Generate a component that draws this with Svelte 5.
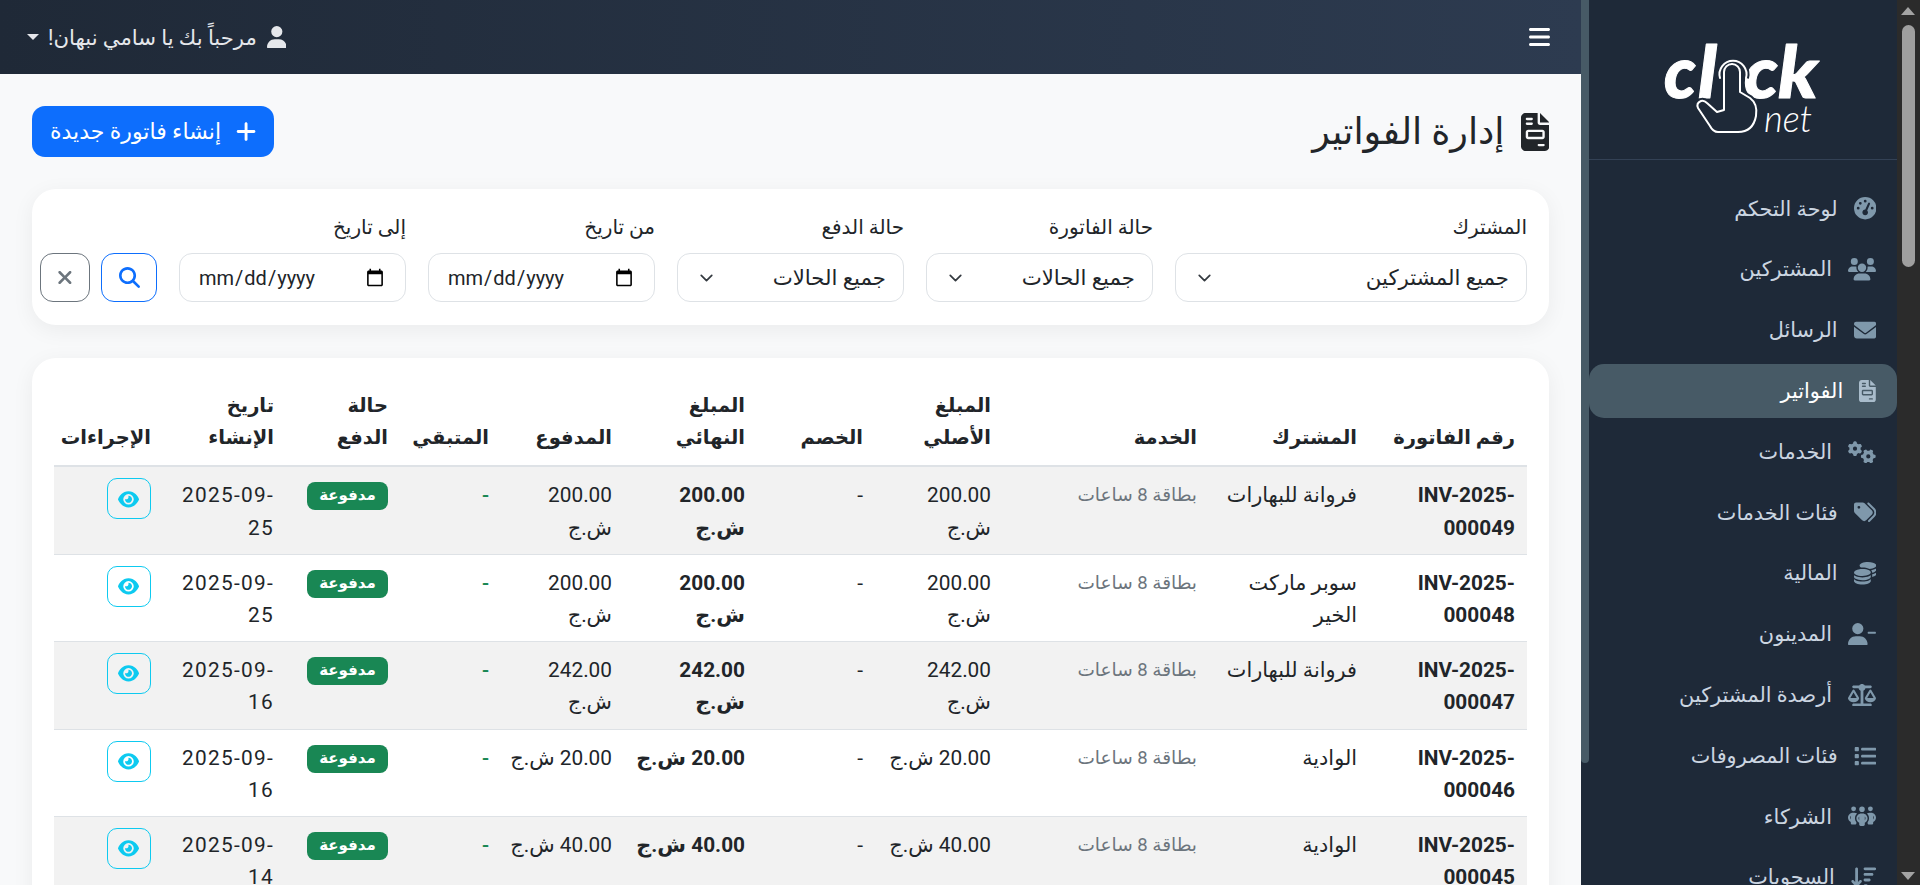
<script>
  const icons = {
    gauge: [512, 'M0 256a256 256 0 1 1 512 0A256 256 0 1 1 0 256zM288 96a32 32 0 1 0 -64 0 32 32 0 1 0 64 0zM256 416c35.3 0 64-28.7 64-64c0-17.4-6.9-33.1-18.1-44.6L366 161.7c5.3-12.1-.2-26.3-12.3-31.6s-26.3 .2-31.6 12.3L257.9 288c-.6 0-1.3 0-1.9 0c-35.3 0-64 28.7-64 64s28.7 64 64 64zM176 144a32 32 0 1 0 -64 0 32 32 0 1 0 64 0zM96 288a32 32 0 1 0 0-64 32 32 0 1 0 0 64zm352-32a32 32 0 1 0 -64 0 32 32 0 1 0 64 0z'],
    users: [640, 'M144 0a80 80 0 1 1 0 160A80 80 0 1 1 144 0zM512 0a80 80 0 1 1 0 160A80 80 0 1 1 512 0zM0 298.7C0 239.8 47.8 192 106.7 192h42.7c15.9 0 31 3.5 44.6 9.7c-1.3 7.2-1.9 14.7-1.9 22.3c0 38.2 16.8 72.5 43.3 96c-.2 0-.4 0-.7 0H21.3C9.6 320 0 310.4 0 298.7zM405.3 320c-.2 0-.4 0-.7 0c26.6-23.5 43.3-57.8 43.3-96c0-7.6-.7-15-1.9-22.3c13.6-6.3 28.7-9.7 44.6-9.7h42.7C592.2 192 640 239.8 640 298.7c0 11.8-9.6 21.3-21.3 21.3H405.3zM224 224a96 96 0 1 1 192 0 96 96 0 1 1 -192 0zM128 485.3C128 411.7 187.7 352 261.3 352H378.7C452.3 352 512 411.7 512 485.3c0 14.7-11.9 26.7-26.7 26.7H154.7c-14.7 0-26.7-11.9-26.7-26.7z'],
    envelope: [512, 'M48 64C21.5 64 0 85.5 0 112c0 15.1 7.1 29.3 19.2 38.4L236.8 313.6c11.4 8.5 27 8.5 38.4 0L492.8 150.4c12.1-9.1 19.2-23.3 19.2-38.4c0-26.5-21.5-48-48-48H48zM0 176V384c0 35.3 28.7 64 64 64H448c35.3 0 64-28.7 64-64V176L294.4 339.2c-22.8 17.1-54 17.1-76.8 0L0 176z'],
    invoice: [384, 'M64 0C28.7 0 0 28.7 0 64V448c0 35.3 28.7 64 64 64H320c35.3 0 64-28.7 64-64V160H256c-17.7 0-32-14.3-32-32V0H64zM256 0V128H384L256 0zM80 64h64c8.8 0 16 7.2 16 16s-7.2 16-16 16H80c-8.8 0-16-7.2-16-16s7.2-16 16-16zm0 64h64c8.8 0 16 7.2 16 16s-7.2 16-16 16H80c-8.8 0-16-7.2-16-16s7.2-16 16-16zm16 96H288c17.7 0 32 14.3 32 32v64c0 17.7-14.3 32-32 32H96c-17.7 0-32-14.3-32-32V256c0-17.7 14.3-32 32-32zm0 32v64H288V256H96zM240 416h64c8.8 0 16 7.2 16 16s-7.2 16-16 16H240c-8.8 0-16-7.2-16-16s7.2-16 16-16z'],
    gears: [640, 'M308.5 135.3c7.1-6.3 9.9-16.2 6.2-25c-2.3-5.3-4.8-10.5-7.6-15.5L304 89.4c-3-5-6.3-9.9-9.8-14.6c-5.7-7.6-15.7-10.1-24.7-7.1l-28.2 9.3c-10.7-8.8-23-16-36.2-20.9L199 27.1c-1.9-9.3-9.1-16.7-18.5-17.8C173.9 8.4 167.2 8 160.4 8h-.7c-6.8 0-13.5 .4-20.1 1.2c-9.4 1.1-16.6 8.6-18.5 17.8L115 56.1c-13.3 5-25.5 12.1-36.2 20.9L50.5 67.8c-9-3-19-.5-24.7 7.1c-3.5 4.7-6.8 9.6-9.9 14.6l-3 5.3c-2.8 5-5.3 10.2-7.6 15.6c-3.7 8.7-.9 18.6 6.2 25l22.2 19.8C32.6 161.9 32 168.9 32 176s.6 14.1 1.7 20.9L11.5 216.7c-7.1 6.3-9.9 16.2-6.2 25c2.3 5.3 4.8 10.5 7.6 15.6l3 5.2c3 5.1 6.3 9.9 9.9 14.6c5.7 7.6 15.7 10.1 24.7 7.1l28.2-9.3c10.7 8.8 23 16 36.2 20.8l6.1 29.1c1.9 9.3 9.1 16.7 18.5 17.8c6.7 .8 13.5 1.2 20.4 1.2s13.7-.4 20.4-1.2c9.4-1.1 16.6-8.6 18.5-17.8l6.1-29.1c13.3-5 25.5-12.1 36.2-20.8l28.2 9.3c9 3 19 .5 24.7-7.1c3.5-4.7 6.8-9.5 9.8-14.6l3.1-5.4c2.8-5 5.3-10.2 7.6-15.5c3.7-8.7 .9-18.6-6.2-25l-22.2-19.8c1.1-6.8 1.7-13.8 1.7-20.9s-.6-14.1-1.7-20.9l22.2-19.8zM208 176a48 48 0 1 1 -96 0 48 48 0 1 1 96 0zM504.7 500.5c6.3 7.1 16.2 9.9 25 6.2c5.3-2.3 10.5-4.8 15.5-7.6l5.4-3.1c5-3 9.9-6.3 14.6-9.8c7.6-5.7 10.1-15.7 7.1-24.7l-9.3-28.2c8.8-10.7 16-23 20.9-36.2l29.1-6.1c9.3-1.9 16.7-9.1 17.8-18.5c.8-6.7 1.2-13.5 1.2-20.4s-.4-13.7-1.2-20.4c-1.1-9.4-8.6-16.6-17.8-18.5L583.9 307c-5-13.3-12.1-25.5-20.9-36.2l9.3-28.2c3-9 .5-19-7.1-24.7c-4.7-3.5-9.6-6.8-14.6-9.9l-5.3-3c-5-2.8-10.2-5.3-15.6-7.6c-8.7-3.7-18.6-.9-25 6.2l-19.8 22.2c-6.8-1.1-13.8-1.7-20.9-1.7s-14.1 .6-20.9 1.7l-19.8-22.2c-6.3-7.1-16.2-9.9-25-6.2c-5.3 2.3-10.5 4.8-15.6 7.6l-5.2 3c-5.1 3-9.9 6.3-14.6 9.9c-7.6 5.7-10.1 15.7-7.1 24.7l9.3 28.2c-8.8 10.7-16 23-20.8 36.2L315.1 313c-9.3 1.9-16.7 9.1-17.8 18.5c-.8 6.7-1.2 13.5-1.2 20.4s.4 13.7 1.2 20.4c1.1 9.4 8.6 16.6 17.8 18.5l29.1 6.1c5 13.3 12.1 25.5 20.8 36.2l-9.3 28.2c-3 9-.5 19 7.1 24.7c4.7 3.5 9.5 6.8 14.6 9.8l5.4 3.1c5 2.8 10.2 5.3 15.5 7.6c8.7 3.7 18.6 .9 25-6.2l19.8-22.2c6.8 1.1 13.8 1.7 20.9 1.7s14.1-.6 20.9-1.7l19.8 22.2zM464 304a48 48 0 1 1 0 96 48 48 0 1 1 0-96z'],
    tags: [512, 'M345 39.1L472.8 168.4c52.4 53 52.4 138.2 0 191.2L360.8 472.9c-9.3 9.4-24.5 9.5-33.9 .2s-9.5-24.5-.2-33.9L438.6 325.9c33.9-34.3 33.9-89.4 0-123.7L310.9 72.9c-9.3-9.4-9.2-24.6 .2-33.9s24.6-9.2 33.9 .2zM0 229.5V80C0 53.5 21.5 32 48 32H197.5c17 0 33.3 6.7 45.3 18.7l168 168c25 25 25 65.5 0 90.5L277.3 442.7c-25 25-65.5 25-90.5 0l-168-168C6.7 262.7 0 246.5 0 229.5zM144 144a32 32 0 1 0 -64 0 32 32 0 1 0 64 0z'],
    coins: [512, 'M512 80c0 18-14.3 34.6-38.4 48c-29.1 16.1-72.5 27.5-122.3 30.9c-3.7-1.8-7.4-3.5-11.3-5C300.6 137.4 248.2 128 192 128c-8.3 0-16.4 .2-24.5 .6l-1.1-.6C142.3 114.6 128 98 128 80c0-44.2 86-80 192-80S512 35.8 512 80zM160.7 161.1c10.2-.7 20.7-1.1 31.3-1.1c62.2 0 117.4 12.3 152.5 31.4C369.3 204.9 384 221.7 384 240c0 4-.7 7.9-2.1 11.7c-4.6 13.2-17 25.3-35 35.5c0 0 0 0 0 0c-.1 .1-.3 .1-.4 .2l0 0 0 0c-.3 .2-.6 .3-.9 .5c-35 19.4-90.8 32-153.6 32c-59.6 0-112.9-11.3-148.2-29.1c-1.9-.9-3.7-1.9-5.5-2.9C14.3 274.6 0 258 0 240c0-34.8 53.4-64.5 128-75.4c10.5-1.5 21.4-2.7 32.7-3.5zM416 240c0-21.9-10.6-39.9-24.1-53.4c28.3-4.4 54.2-11.4 76.2-20.5c16.3-6.8 31.5-15.2 43.9-25.5V176c0 19.3-16.5 37.1-43.8 50.9c-14.6 7.4-32.4 13.7-52.4 18.5c.1-1.8 .2-3.5 .2-5.3zm-32 96c0 18-14.3 34.6-38.4 48c-1.8 1-3.6 1.9-5.5 2.9C304.9 404.7 251.6 416 192 416c-62.8 0-118.6-12.6-153.6-32C14.3 370.6 0 354 0 336V300.6c12.5 10.3 27.6 18.7 43.9 25.5C83.4 342.6 135.8 352 192 352s108.6-9.4 148.1-25.9c7.8-3.2 15.3-6.9 22.4-10.9c6.1-3.4 11.8-7.2 17.2-11.2c1.5-1.1 2.9-2.3 4.3-3.4V304v5.7V336zm32 0V304 278.1c19-4.2 36.5-9.5 52.1-16c16.3-6.8 31.5-15.2 43.9-25.5V272c0 10.5-5 21-14.9 30.9c-16.3 16.3-45 29.7-81.3 38.4c.1-1.7 .2-3.5 .2-5.3zM192 448c56.2 0 108.6-9.4 148.1-25.9c16.3-6.8 31.5-15.2 43.9-25.5V432c0 44.2-86 80-192 80S0 476.2 0 432V396.6c12.5 10.3 27.6 18.7 43.9 25.5C83.4 438.6 135.8 448 192 448z'],
    userMinus: [640, 'M96 128a128 128 0 1 1 256 0A128 128 0 1 1 96 128zM0 482.3C0 383.8 79.8 304 178.3 304h91.4C368.2 304 448 383.8 448 482.3c0 16.4-13.3 29.7-29.7 29.7H29.7C13.3 512 0 498.7 0 482.3zM472 200H616c13.3 0 24 10.7 24 24s-10.7 24-24 24H472c-13.3 0-24-10.7-24-24s10.7-24 24-24z'],
    scale: [640, 'M384 32H512c17.7 0 32 14.3 32 32s-14.3 32-32 32H398.4c-5.2 25.8-22.9 47.1-46.4 57.3V448H512c17.7 0 32 14.3 32 32s-14.3 32-32 32H320 128c-17.7 0-32-14.3-32-32s14.3-32 32-32H288V153.3c-23.5-10.3-41.2-31.6-46.4-57.3H128c-17.7 0-32-14.3-32-32s14.3-32 32-32H256c14.6-19.4 37.8-32 64-32s49.4 12.6 64 32zm55.6 288H584.4L512 195.8 439.6 320zM512 416c-62.9 0-115.2-34-126-78.9c-2.6-11 1-22.3 6.7-32.1l95.2-163.2c5-8.6 14.2-13.8 24.1-13.8s19.1 5.3 24.1 13.8l95.2 163.2c5.7 9.8 9.3 21.1 6.7 32.1C627.2 382 574.9 416 512 416zM126.8 195.8L54.4 320H199.3L126.8 195.8zM.9 337.1c-2.6-11 1-22.3 6.7-32.1l95.2-163.2c5-8.6 14.2-13.8 24.1-13.8s19.1 5.3 24.1 13.8l95.2 163.2c5.7 9.8 9.3 21.1 6.7 32.1C242 382 189.7 416 126.8 416S11.7 382 .9 337.1z'],
    list: [512, 'M40 48C26.7 48 16 58.7 16 72v48c0 13.3 10.7 24 24 24H88c13.3 0 24-10.7 24-24V72c0-13.3-10.7-24-24-24H40zM192 64c-17.7 0-32 14.3-32 32s14.3 32 32 32H480c17.7 0 32-14.3 32-32s-14.3-32-32-32H192zm0 160c-17.7 0-32 14.3-32 32s14.3 32 32 32H480c17.7 0 32-14.3 32-32s-14.3-32-32-32H192zm0 160c-17.7 0-32 14.3-32 32s14.3 32 32 32H480c17.7 0 32-14.3 32-32s-14.3-32-32-32H192zM16 232v48c0 13.3 10.7 24 24 24H88c13.3 0 24-10.7 24-24V232c0-13.3-10.7-24-24-24H40c-13.3 0-24 10.7-24 24zM40 368c-13.3 0-24 10.7-24 24v48c0 13.3 10.7 24 24 24H88c13.3 0 24-10.7 24-24V392c0-13.3-10.7-24-24-24H40z'],
    group: [640, 'M72 88a56 56 0 1 1 112 0A56 56 0 1 1 72 88zM64 245.7C54 256.9 48 271.8 48 288s6 31.1 16 42.3V245.7zm144.4-49.3C178.7 222.7 160 261.2 160 304c0 34.3 12 65.8 32 90.5V416c0 17.7-14.3 32-32 32H96c-17.7 0-32-14.3-32-32V389.2C26.2 371.2 0 332.7 0 288c0-61.9 50.1-112 112-112h32c24 0 46.2 7.5 64.4 20.3zM448 416V394.5c20-24.7 32-56.2 32-90.5c0-42.8-18.7-81.3-48.4-107.7C449.8 183.5 472 176 496 176h32c61.9 0 112 50.1 112 112c0 44.7-26.2 83.2-64 101.2V416c0 17.7-14.3 32-32 32H480c-17.7 0-32-14.3-32-32zm8-328a56 56 0 1 1 112 0A56 56 0 1 1 456 88zM576 245.7v84.7c10-11.3 16-26.1 16-42.3s-6-31.1-16-42.3zM320 32a64 64 0 1 1 0 128 64 64 0 1 1 0-128zM240 304c0 16.2 6 31 16 42.3V261.7c-10 11.3-16 26.1-16 42.3zm144-42.3v84.7c10-11.3 16-26.1 16-42.3s-6-31.1-16-42.3zM448 304c0 44.7-26.2 83.2-64 101.2V448c0 17.7-14.3 32-32 32H288c-17.7 0-32-14.3-32-32V405.2c-37.8-18-64-56.5-64-101.2c0-61.9 50.1-112 112-112h32c61.9 0 112 50.1 112 112z'],
    sortDown: [576, 'M151.6 469.6C145.5 476.2 137 480 128 480s-17.5-3.8-23.6-10.4l-88-96c-11.9-13-11.1-33.3 2-45.2s33.3-11.1 45.2 2L96 365.7V64c0-17.7 14.3-32 32-32s32 14.3 32 32V365.7l32.4-35.4c11.9-13 32.2-13.9 45.2-2s13.9 32.2 2 45.2l-88 96zM320 480c-17.7 0-32-14.3-32-32s14.3-32 32-32h32c17.7 0 32 14.3 32 32s-14.3 32-32 32H320zm0-128c-17.7 0-32-14.3-32-32s14.3-32 32-32h96c17.7 0 32 14.3 32 32s-14.3 32-32 32H320zm0-128c-17.7 0-32-14.3-32-32s14.3-32 32-32H480c17.7 0 32 14.3 32 32s-14.3 32-32 32H320zm0-128c-17.7 0-32-14.3-32-32s14.3-32 32-32H544c17.7 0 32 14.3 32 32s-14.3 32-32 32H320z'],
    user: [448, 'M224 256A128 128 0 1 0 224 0a128 128 0 1 0 0 256zm-45.7 48C79.8 304 0 383.8 0 482.3C0 498.7 13.3 512 29.7 512H418.3c16.4 0 29.7-13.3 29.7-29.7C448 383.8 368.2 304 269.7 304H178.3z'],
    bars: [448, 'M0 96C0 78.3 14.3 64 32 64H416c17.7 0 32 14.3 32 32s-14.3 32-32 32H32C14.3 128 0 113.7 0 96zM0 256c0-17.7 14.3-32 32-32H416c17.7 0 32 14.3 32 32s-14.3 32-32 32H32c-17.7 0-32-14.3-32-32zM448 416c0 17.7-14.3 32-32 32H32c-17.7 0-32-14.3-32-32s14.3-32 32-32H416c17.7 0 32 14.3 32 32z'],
    plus: [448, 'M256 80c0-17.7-14.3-32-32-32s-32 14.3-32 32V224H48c-17.7 0-32 14.3-32 32s14.3 32 32 32H192V432c0 17.7 14.3 32 32 32s32-14.3 32-32V288H400c17.7 0 32-14.3 32-32s-14.3-32-32-32H256V80z'],
    search: [512, 'M416 208c0 45.9-14.9 88.3-40.8 122.7L502.6 457.4c12.5 12.5 12.5 32.8 0 45.3s-32.8 12.5-45.3 0L330.7 376c-34.4 25.9-76.8 40.8-122.7 40.8C93.1 416 0 322.9 0 208S93.1 0 208 0S416 93.1 416 208zM208 352a144 144 0 1 0 0-288 144 144 0 1 0 0 288z'],
    xmark: [384, 'M342.6 150.6c12.5-12.5 12.5-32.8 0-45.3s-32.8-12.5-45.3 0L192 210.7 86.6 105.4c-12.5-12.5-32.8-12.5-45.3 0s-12.5 32.8 0 45.3L146.7 256 41.4 361.4c-12.5 12.5-12.5 32.8 0 45.3s32.8 12.5 45.3 0L192 301.3 297.4 406.6c12.5 12.5 32.8 12.5 45.3 0s12.5-32.8 0-45.3L237.3 256 342.6 150.6z'],
    eye: [576, 'M288 32c-80.8 0-145.5 36.8-192.6 80.6C48.6 156 17.3 208 2.5 243.7c-3.3 7.9-3.3 16.7 0 24.6C17.3 304 48.6 356 95.4 399.4C142.5 443.2 207.2 480 288 480s145.5-36.8 192.6-80.6c46.8-43.5 78.1-95.4 93-131.1c3.3-7.9 3.3-16.7 0-24.6c-14.9-35.7-46.2-87.7-93-131.1C433.5 68.8 368.8 32 288 32zM144 256a144 144 0 1 1 288 0 144 144 0 1 1 -288 0zm144-64c0 35.3-28.7 64-64 64c-7.1 0-13.9-1.2-20.3-3.3c-5.5-1.8-11.9 1.6-11.7 7.4c.3 6.9 1.3 13.8 3.2 20.7c13.7 51.2 66.4 81.6 117.6 67.9s81.6-66.4 67.9-117.6c-11.1-41.5-47.8-69.4-88.6-71.1c-5.8-.2-9.2 6.1-7.4 11.7c2.1 6.4 3.3 13.2 3.3 20.3z']
  };

  const menu = [
    ['gauge', 'لوحة التحكم'],
    ['users', 'المشتركين'],
    ['envelope', 'الرسائل'],
    ['invoice', 'الفواتير', true],
    ['gears', 'الخدمات'],
    ['tags', 'فئات الخدمات'],
    ['coins', 'المالية'],
    ['userMinus', 'المدينون'],
    ['scale', 'أرصدة المشتركين'],
    ['list', 'فئات المصروفات'],
    ['group', 'الشركاء'],
    ['sortDown', 'السحوبات']
  ];

  const invoices = [
    { no: 'INV-2025-000049', who: 'فروانة للبهارات', amount: '200.00', date: '2025-09-25' },
    { no: 'INV-2025-000048', who: 'سوبر ماركت الخير', amount: '200.00', date: '2025-09-25' },
    { no: 'INV-2025-000047', who: 'فروانة للبهارات', amount: '242.00', date: '2025-09-16' },
    { no: 'INV-2025-000046', who: 'الوادية', amount: '20.00', date: '2025-09-16' },
    { no: 'INV-2025-000045', who: 'الوادية', amount: '40.00', date: '2025-09-14' }
  ];

  const hand = 'M104 90V52a8 8 0 0 1 16 0V72l10 6q8 6 6 18q-3 16-18 16H98q-5 0-8-6L78 88q-2-5 3-7q3-1 6 2l10 9z';
</script>

{#snippet icon(name, h)}
  <svg class="ico" viewBox="0 0 {icons[name][0]} 512" height={h} width={(h * icons[name][0]) / 512} fill="currentColor">
    <path d={icons[name][1]} />
  </svg>
{/snippet}

<div class="app" dir="rtl">
  <div class="pagebar">
    <span class="arrow up"></span>
    <span class="thumb"></span>
    <span class="arrow down"></span>
  </div>

  <aside class="sidebar">
    <div class="logo">
      <svg viewBox="0 0 220 130" width="220" height="130">
        <g fill="#fff" stroke="#fff" stroke-width="1" stroke-linejoin="round" font-family="Lato, sans-serif" font-weight="900" font-style="italic" font-size="72">
          <text x="44" y="78" textLength="32" lengthAdjust="spacingAndGlyphs">c</text>
          <text x="78" y="78" textLength="19" lengthAdjust="spacingAndGlyphs">l</text>
          <text x="124" y="78" textLength="34" lengthAdjust="spacingAndGlyphs">c</text>
          <text x="158" y="78" textLength="40" lengthAdjust="spacingAndGlyphs">k</text>
        </g>
        <text x="144" y="112" fill="#fff" font-family="Lato, sans-serif" font-style="italic" font-weight="300" font-size="38" textLength="48" lengthAdjust="spacingAndGlyphs">net</text>
        <g fill="none" stroke="#1e2938" stroke-width="6" stroke-linejoin="round">
          <path d={hand} />
          <path d="M100 58a13.500 13.500 0 1 1 26 0" />
        </g>
        <path d={hand} fill="#1e2938" />
        <g fill="none" stroke="#fff" stroke-width="2" stroke-linecap="round" stroke-linejoin="round">
          <path d={hand} />
          <path d="M100 58a13.500 13.500 0 1 1 26 0" />
        </g>
      </svg>
    </div>
    <nav class="menu">
      {#each menu as [ic, label, active]}
        <a class="item" class:active href="#top">
          <span class="item-ico">{@render icon(ic, 22.4)}</span>
          <span>{label}</span>
        </a>
      {/each}
    </nav>
  </aside>

  <div class="sidebar-scroll"><span></span></div>

  <main class="main">
    <header class="topbar">
      <span class="bars">{@render icon('bars', 24)}</span>
      <div class="greet">
        {@render icon('user', 22.4)}
        <span>مرحباً بك يا سامي نبهان!</span>
        <i class="caret"></i>
      </div>
    </header>

    <div class="content">
      <div class="title-row">
        <h1>{@render icon('invoice', 38)} إدارة الفواتير</h1>
        <button class="btn-new">{@render icon('plus', 23)} إنشاء فاتورة جديدة</button>
      </div>

      <section class="card filters">
        <label class="field wide"><span>المشترك</span>
          <select><option>جميع المشتركين</option></select>
        </label>
        <label class="field"><span>حالة الفاتورة</span>
          <select><option>جميع الحالات</option></select>
        </label>
        <label class="field"><span>حالة الدفع</span>
          <select><option>جميع الحالات</option></select>
        </label>
        <label class="field"><span>من تاريخ</span>
          <input type="date" dir="ltr" />
        </label>
        <label class="field"><span>إلى تاريخ</span>
          <input type="date" dir="ltr" />
        </label>
        <div class="actions">
          <button class="btn-search" aria-label="بحث">{@render icon('search', 21)}</button>
          <button class="btn-clear" aria-label="مسح">{@render icon('xmark', 21)}</button>
        </div>
      </section>

      <section class="card table-card">
        <table>
          <colgroup>
            <col style="width:158px" /><col style="width:160px" /><col style="width:206px" /><col style="width:128px" />
            <col style="width:118px" /><col style="width:133px" /><col style="width:123px" /><col style="width:101px" />
            <col style="width:114px" /><col style="width:123px" /><col style="width:109px" />
          </colgroup>
          <thead>
            <tr>
              <th>رقم الفاتورة</th>
              <th>المشترك</th>
              <th>الخدمة</th>
              <th>المبلغ الأصلي</th>
              <th>الخصم</th>
              <th>المبلغ النهائي</th>
              <th>المدفوع</th>
              <th>المتبقي</th>
              <th>حالة الدفع</th>
              <th>تاريخ الإنشاء</th>
              <th>الإجراءات</th>
            </tr>
          </thead>
          <tbody>
            {#each invoices as inv}
              <tr>
                <td class="strong">{inv.no}</td>
                <td>{inv.who}</td>
                <td class="muted">بطاقة 8 ساعات</td>
                <td>{inv.amount} ش.ج</td>
                <td>-</td>
                <td class="strong">{inv.amount} ش.ج</td>
                <td>{inv.amount} ش.ج</td>
                <td class="rest">-</td>
                <td><span class="badge">مدفوعة</span></td>
                <td class="date">{inv.date}</td>
                <td><button class="btn-eye" aria-label="عرض">{@render icon('eye', 18.7)}</button></td>
              </tr>
            {/each}
          </tbody>
        </table>
      </section>
    </div>
  </main>
</div>

<style>
  :global(body) {
    margin: 0;
    overflow: hidden;
  }

  .app {
    display: flex;
    height: 885px;
    overflow: hidden;
    font-family: Roboto, "DejaVu Sans", sans-serif;
    font-size: 20.8px;
    color: #212529;
    background: #f8f9fa;
  }

  .ico {
    display: inline-block;
    flex: none;
  }

  /* browser scrollbar */
  .pagebar {
    flex: 0 0 23px;
    background: #2b2b2b;
    position: relative;
  }

  .thumb {
    position: absolute;
    top: 25px;
    left: 5px;
    width: 13px;
    height: 242px;
    border-radius: 7px;
    background: #9f9f9f;
  }

  .arrow {
    position: absolute;
    left: 4px;
    border-left: 7.5px solid transparent;
    border-right: 7.5px solid transparent;
  }

  .arrow.up {
    top: 7px;
    border-bottom: 8px solid #a3a3a3;
  }

  .arrow.down {
    bottom: 5px;
    border-top: 8px solid #a3a3a3;
  }

  /* sidebar */
  .sidebar {
    flex: 0 0 308px;
    background: #1e2938;
    overflow: hidden;
  }

  .sidebar-scroll {
    flex: 0 0 8px;
    background: #1e2938;
  }

  .sidebar-scroll span {
    display: block;
    height: 763px;
    background: #475a66;
    border-radius: 0 0 4px 4px;
  }

  .logo {
    height: 160px;
    box-sizing: border-box;
    border-bottom: 1px solid #334155;
    display: flex;
    justify-content: flex-start;
    align-items: flex-start;
    padding: 20px 57px 0 0;
  }

  .logo svg {
    direction: ltr;
  }

  .menu {
    padding-top: 21.6px;
    display: flex;
    flex-direction: column;
    gap: 6.8px;
  }

  .item {
    display: flex;
    align-items: center;
    gap: 16px;
    height: 54px;
    flex: none;
    padding: 0 21px;
    border-radius: 15px;
    color: #cbd5e1;
    text-decoration: none;
    font-size: 20.8px;
  }

  .item-ico {
    display: flex;
    color: #7f98ab;
  }

  .item.active {
    background: #475a66;
    color: #fff;
  }

  .item.active .item-ico {
    color: #a9bccb;
  }

  /* main */
  .main {
    flex: 1;
    min-width: 0;
  }

  .topbar {
    height: 74px;
    display: flex;
    align-items: center;
    justify-content: space-between;
    padding: 0 31px 0 27px;
    background: linear-gradient(270deg, #2d3b50, #1f2937);
    color: #e5e7eb;
  }

  .bars {
    display: flex;
    color: #fff;
  }

  .greet {
    display: flex;
    align-items: center;
    gap: 10px;
    font-size: 21.2px;
  }

  .caret {
    margin-right: -1px;
    border-top: 6px solid #e5e7eb;
    border-left: 6px solid transparent;
    border-right: 6px solid transparent;
  }

  .content {
    padding: 32px;
  }

  .title-row {
    display: flex;
    justify-content: space-between;
    align-items: center;
    margin-bottom: 32px;
  }

  h1 {
    margin: 0;
    font-size: 36.5px;
    font-weight: 400;
    display: flex;
    align-items: center;
    gap: 16px;
  }

  .btn-new {
    display: flex;
    align-items: center;
    gap: 15px;
    height: 51px;
    padding: 0 18px;
    border: 0;
    border-radius: 13px;
    background: #0d6efd;
    color: #fff;
    font: inherit;
    font-size: 22px;
  }

  .card {
    background: #fff;
    border-radius: 24px;
    box-shadow: 0 5px 22px rgba(0, 0, 0, 0.06);
  }

  .filters {
    display: flex;
    align-items: flex-end;
    gap: 22px;
    padding: 26px 22px 23px 7px;
    margin-bottom: 33px;
  }

  .field {
    display: flex;
    flex-direction: column;
    gap: 14px;
    width: 227px;
    flex: none;
    font-size: 20px;
  }

  .field.wide {
    width: 352px;
  }

  select,
  input {
    box-sizing: border-box;
    width: 100%;
    height: 49px;
    border: 1px solid #dee2e6;
    border-radius: 13px;
    background-color: #fff;
    color: #212529;
    font: inherit;
    font-size: 20px;
  }

  select {
    appearance: none;
    padding: 0 17px 0 40px;
    font-size: 21.3px;
    background-image: url("data:image/svg+xml,%3csvg xmlns='http://www.w3.org/2000/svg' viewBox='0 0 16 16'%3e%3cpath fill='none' stroke='%23343a40' stroke-linecap='round' stroke-linejoin='round' stroke-width='2' d='m2 5 6 6 6-6'/%3e%3c/svg%3e");
    background-repeat: no-repeat;
    background-position: left 19px center;
    background-size: 19px 14px;
  }

  input {
    padding: 0 18px;
  }

  .actions {
    display: flex;
    gap: 11px;
  }

  .actions button {
    height: 49px;
    background: #fff;
    border-radius: 13px;
    display: flex;
    align-items: center;
    justify-content: center;
  }

  .btn-search {
    width: 56px;
    border: 1px solid #0d6efd;
    color: #0d6efd;
  }

  .btn-clear {
    width: 50px;
    border: 1px solid #6c757d;
    color: #6c757d;
  }

  .table-card {
    padding: 21px 22px 40px 21px;
    height: 600px;
  }

  table {
    width: 1473px;
    table-layout: fixed;
    border-collapse: collapse;
    line-height: 32.2px;
  }

  th {
    font-weight: 700;
    font-size: 19.5px;
    text-align: right;
    vertical-align: bottom;
    padding: 11px 12px 11px 13px;
    border-bottom: 2px solid #dee2e6;
  }

  td {
    vertical-align: top;
    padding: 12px 12px 10px 8px;
    border-bottom: 1px solid #dee2e6;
  }

  tbody tr:nth-child(odd) {
    background: #f2f2f2;
  }

  .strong {
    font-weight: 700;
  }

  .muted {
    color: #6c757d;
    font-size: 18.5px;
  }

  .rest {
    color: #198754;
    font-weight: 500;
  }

  .date {
    letter-spacing: 1.3px;
  }

  .badge {
    display: inline-block;
    width: 81px;
    height: 28px;
    margin: 3px 0 0 -1px;
    border-radius: 8px;
    background: #198754;
    color: #fff;
    font-size: 15px;
    font-weight: 700;
    line-height: 27px;
    text-align: center;
    vertical-align: top;
  }

  .btn-eye {
    width: 44px;
    height: 41px;
    margin-top: -1px;
    padding: 0;
    display: flex;
    align-items: center;
    justify-content: center;
    background: transparent;
    border: 1px solid #0dcaf0;
    border-radius: 10px;
    color: #0dcaf0;
  }
</style>
